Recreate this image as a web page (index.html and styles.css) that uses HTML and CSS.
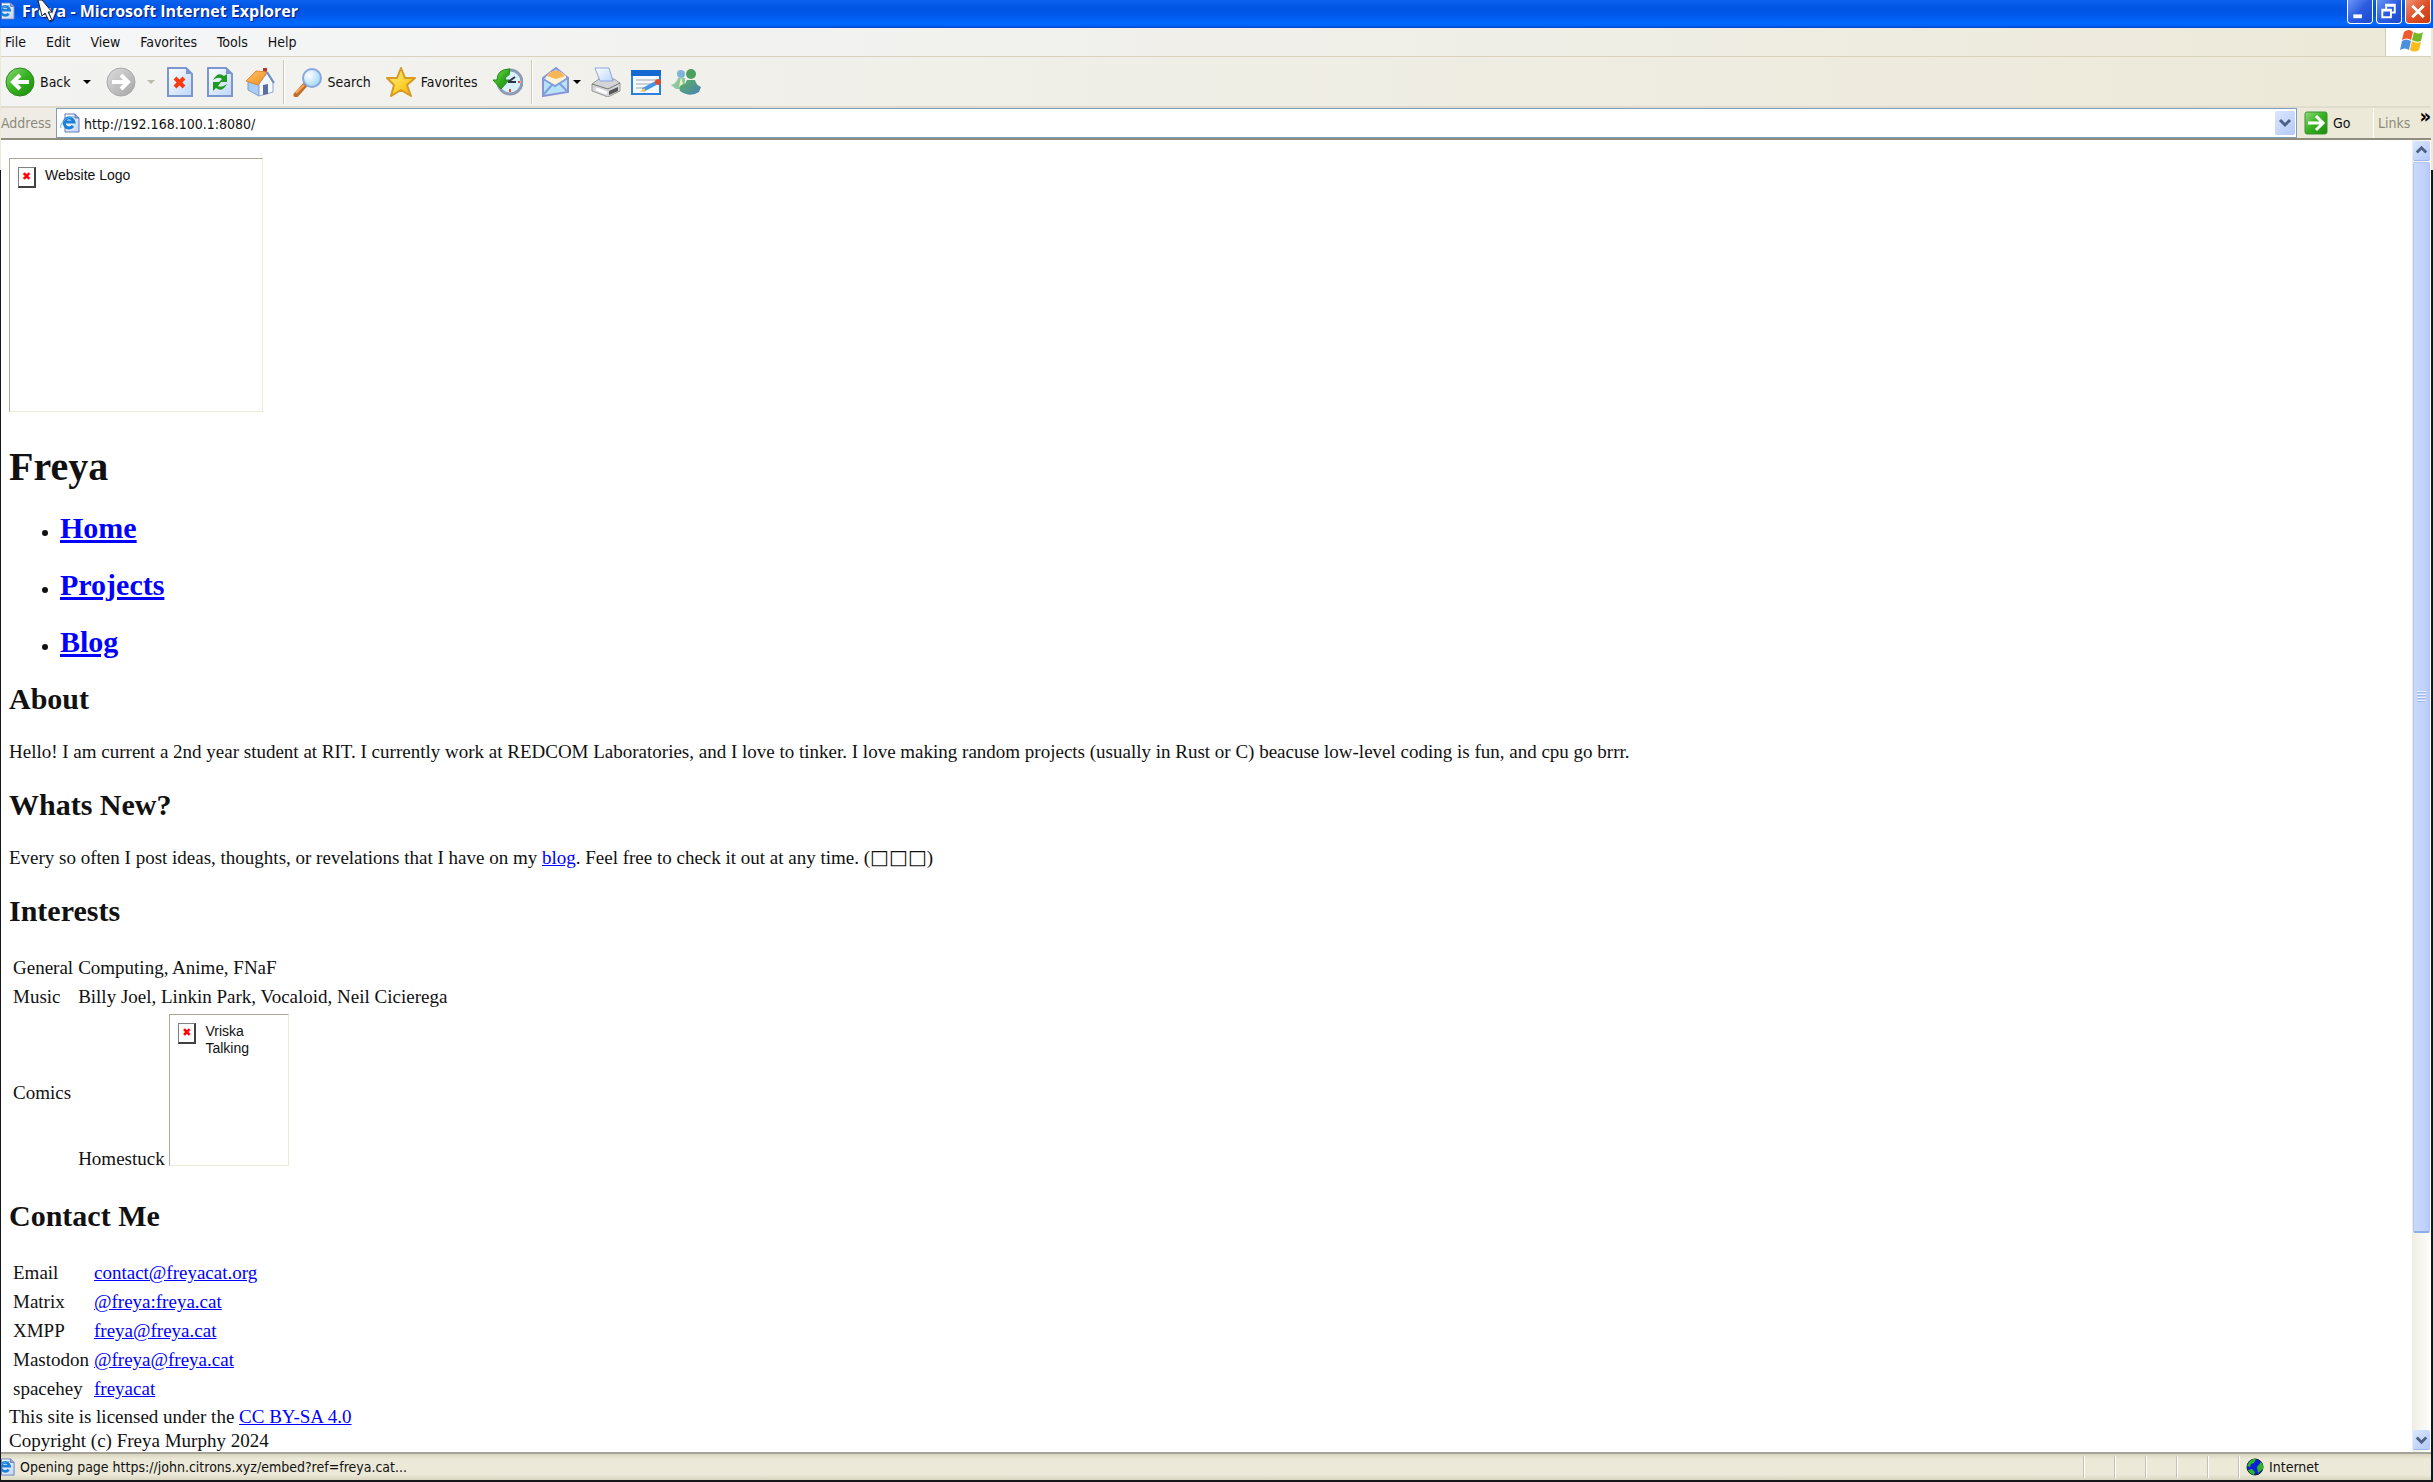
FILE: index.html
```html
<!DOCTYPE html>
<html lang="en">
<head>
    <meta charset="UTF-8">
    <meta name="viewport" content="width=device-width, initial-scale=1.0">
    <title>Freya - Microsoft Internet Explorer</title>
    <link rel="stylesheet" href="styles.css">
</head>
<body>
    <!-- shared gradients and the small page icon -->
    <svg class="defs" aria-hidden="true">
        <defs>
            <linearGradient id="green" x1="0" y1="0" x2="1" y2="1"><stop offset="0" stop-color="#8ddc78"/><stop offset=".5" stop-color="#36b01f"/><stop offset="1" stop-color="#1b8a0d"/></linearGradient>
            <linearGradient id="grey" x1="0" y1="0" x2="1" y2="1"><stop offset="0" stop-color="#dedede"/><stop offset="1" stop-color="#a4a4a4"/></linearGradient>
            <linearGradient id="paper" x1="0" y1="0" x2="1" y2="1"><stop offset="0" stop-color="#fff"/><stop offset="1" stop-color="#bcd6fb"/></linearGradient>
            <linearGradient id="gold" x1="0" y1="0" x2="1" y2="1"><stop offset="0" stop-color="#fff38a"/><stop offset=".6" stop-color="#fcd12f"/><stop offset="1" stop-color="#eb9d14"/></linearGradient>
            <linearGradient id="roof" x1="0" y1="0" x2="1" y2="1"><stop offset="0" stop-color="#ffc66a"/><stop offset="1" stop-color="#f08a1c"/></linearGradient>
            <linearGradient id="buddy" x1="0" y1="0" x2="1" y2="1"><stop offset="0" stop-color="#57b35c"/><stop offset="1" stop-color="#4d80b8"/></linearGradient>
            <radialGradient id="lens" cx=".35" cy=".35" r=".7"><stop offset="0" stop-color="#fff"/><stop offset="1" stop-color="#9ed7f8"/></radialGradient>
        </defs>
        <symbol id="ie-page" viewBox="0 0 20 20">
            <path d="M5 1h10l4 4v14H5z" fill="url(#paper)" stroke="#6478b8"/>
            <path d="M15 1v4h4" fill="#8fa6dd" stroke="#6478b8"/>
            <path d="M13 13a5 5 0 1 1 1-4H5" fill="none" stroke="#1e7fd6" stroke-width="3"/>
            <path d="M1 15C-1 11 7 3 14 4" fill="none" stroke="#58b1ee" stroke-width="1"/>
        </symbol>
    </svg>

    <div class="window">
        <header class="titlebar">
            <svg class="title-icon"><use href="#ie-page"/></svg>
            <span class="title-text">Freya - Microsoft Internet Explorer</span>
            <div class="controls">
                <button class="control" aria-label="Minimize"><svg viewBox="0 0 24 24"><path d="M5 15h9v4H5z" fill="#fff"/></svg></button>
                <button class="control" aria-label="Restore"><svg viewBox="0 0 24 24"><path d="M9 9V5h9v8h-4M9 6h9M5 10h9v8H5zM5 11h9" fill="none" stroke="#fff" stroke-width="2"/></svg></button>
                <button class="control close" aria-label="Close"><svg viewBox="0 0 24 24"><path d="M6 6l12 12M18 6L6 18" fill="none" stroke="#fff" stroke-width="3"/></svg></button>
            </div>
            <svg class="cursor" viewBox="0 0 16 22" aria-hidden="true"><path d="M1 0l4 16 3-3 4 8 3-1-4-8h4L5 0z" fill="#fff" stroke="#222"/></svg>
        </header>

        <nav class="menubar">
            <div class="menus">
                <button>File</button>
                <button>Edit</button>
                <button>View</button>
                <button>Favorites</button>
                <button>Tools</button>
                <button>Help</button>
            </div>
            <div class="throbber">
                <svg viewBox="0 0 26 24">
                    <path d="M6 3q5-4 9 0l-2 8q-4-3-9 0z" fill="#ee5a2b"/>
                    <path d="M16 3q5 3 9 0l-2 9q-4 2-9-1z" fill="#72b827"/>
                    <path d="M4 12q4-3 9 0l-2 9q-4-3-9 0z" fill="#4b8fdf"/>
                    <path d="M14 12q4 3 9 1l-2 8q-5 3-9 0z" fill="#f7bd1b"/>
                </svg>
            </div>
        </nav>

        <div class="toolbar">
            <button class="tool back">
                <svg class="icon" viewBox="0 0 30 30"><circle cx="15" cy="15" r="14" fill="url(#green)" stroke="#2b8a1c"/><path d="M24 15H8M15 8l-7 7 7 7" fill="none" stroke="#fff" stroke-width="4"/></svg>
                Back
                <span class="arrow"></span>
            </button>
            <button class="tool forward" disabled aria-label="Forward">
                <svg class="icon" viewBox="0 0 30 30"><circle cx="15" cy="15" r="14" fill="url(#grey)" stroke="#a9a9a9"/><path d="M6 15h16M15 8l7 7-7 7" fill="none" stroke="#fff" stroke-width="4"/></svg>
                <span class="arrow"></span>
            </button>
            <button class="tool" aria-label="Stop">
                <svg class="icon" viewBox="0 0 30 30"><path d="M3 1h18l6 6v22H3z" fill="url(#paper)" stroke="#7c96cf" stroke-width="2"/><path d="M21 1v6h6" fill="#7c96cf"/><path d="M10 11l9 9M19 11l-9 9" stroke="#fa3b12" stroke-width="4"/></svg>
            </button>
            <button class="tool" aria-label="Refresh">
                <svg class="icon" viewBox="0 0 30 30"><path d="M3 1h18l6 6v22H3z" fill="url(#paper)" stroke="#7c96cf" stroke-width="2"/><path d="M21 1v6h6" fill="#7c96cf"/><path d="M8 13q5-9 11-4l3-2v8h-8l3-3q-3-3-9 1zM22 17q-5 9-11 4l-3 3v-9h8l-3 4q4 2 9-2z" fill="#1e9a1e"/></svg>
            </button>
            <button class="tool" aria-label="Home">
                <svg class="icon" viewBox="0 0 30 30"><path d="M18 1h4v8h-4z" fill="#b4392b"/><path d="M3 15l11 3v11L3 23z" fill="#a9cdf5" stroke="#7d9cd0"/><path d="M14 17l8-11 6 10v9l-14 4z" fill="#f4f8ff" stroke="#8ea6d4"/><path d="M1 14L11 4l11 1-9 13z" fill="url(#roof)" stroke="#df8a32"/><path d="M22 5l7 11" stroke="#6f8bc4" stroke-width="2"/><path d="M18 18l5-1v10l-5 1z" fill="#5c6e9e"/></svg>
            </button>
            <span class="divider"></span>
            <button class="tool search">
                <svg class="icon" viewBox="0 0 30 30"><path d="M12 18L3 28" stroke="#c26c2b" stroke-width="5" stroke-linecap="round"/><path d="M11 18L3 26" stroke="#f7a95a" stroke-width="2"/><circle cx="19" cy="11" r="9" fill="url(#lens)" stroke="#8ba6dc" stroke-width="2"/></svg>
                Search
            </button>
            <button class="tool favorites">
                <svg class="icon" viewBox="0 0 30 30"><path d="M15 1l4 10 10 0-8 7 4 11-10-6-10 6 3-11-7-7h10z" fill="url(#gold)" stroke="#d89a26" stroke-width="2" stroke-linejoin="round"/></svg>
                Favorites
            </button>
            <button class="tool history" aria-label="History">
                <svg class="icon" viewBox="0 0 30 30"><circle cx="17" cy="15" r="12" fill="#d6f0fd" stroke="#8e9bb5" stroke-width="3"/><path d="M15 15l7-5M15 15h8" stroke="#334" stroke-width="2"/><path d="M17 22v3M25 15h2" stroke="#e5532f" stroke-width="2"/><path d="M17 2Q4 2 4 13H0l8 9 8-9h-4q0-4 4-5z" fill="url(#green)" stroke="#258a1a"/></svg>
            </button>
            <span class="divider"></span>
            <button class="tool mail" aria-label="Mail">
                <svg class="icon" viewBox="0 0 30 30"><path d="M2 11L15 1l12 10v14L2 29z" fill="#b7e2fb" stroke="#8b92d6" stroke-width="2"/><path d="M5 10Q14-2 25 9v4l-11 6-9-5z" fill="#fdf3da"/><path d="M6 9Q15-2 24 9l-9 3z" fill="#f6b655"/><path d="M2 12l12 7 13-8M2 28l9-10M27 25l-9-9" fill="none" stroke="#7e9fdd" stroke-width="2"/></svg>
                <span class="arrow"></span>
            </button>
            <button class="tool" aria-label="Print">
                <svg class="icon" viewBox="0 0 30 30"><path d="M1 17l7-5h15l6 4v8l-12 6-16-6z" fill="#d5d5d8" stroke="#999"/><path d="M4 1h14l4 13H9z" fill="url(#paper)" stroke="#8ba6e0"/><path d="M1 17l16 5 12-6" fill="none" stroke="#777"/><path d="M5 22l11 4" stroke="#fff" stroke-width="3"/><path d="M18 24l9-4v4l-9 4z" fill="#555"/></svg>
            </button>
            <button class="tool" aria-label="Edit">
                <svg class="icon" viewBox="0 0 30 30"><path d="M1 4h28v23H1z" fill="#f4f8ff" stroke="#2b7fdd" stroke-width="2"/><path d="M0 3h30v6H0z" fill="#1468cf"/><path d="M5 13h20M5 17h16M5 21h8" stroke="#a5a5ad" stroke-width="1"/><path d="M12 23l13-7" stroke="#4696e8" stroke-width="4"/><path d="M9 25l4-4 2 3z" fill="#f2c14e"/><circle cx="27" cy="15" r="3" fill="#df4c2b"/></svg>
            </button>
            <button class="tool" aria-label="Messenger">
                <svg class="icon" viewBox="0 0 30 30"><circle cx="10" cy="7" r="4" fill="#7fb4d8"/><path d="M0 18q5-1 7-7h7v11H5z" fill="#8cc7a0"/><path d="M10 10l2 7-4 3z" fill="#f5efb0"/><circle cx="20" cy="7" r="5" fill="#4da05f"/><path d="M9 24q-2-6 5-7l2-4h8q1 5 6 7l-2 5q-9 6-19-1z" fill="url(#buddy)"/></svg>
            </button>
        </div>

        <form class="addressbar">
            <label for="address">Address</label>
            <div class="combo">
                <svg class="page-icon"><use href="#ie-page"/></svg>
                <input id="address" type="text" value="http://192.168.100.1:8080/">
                <button type="button" class="drop" aria-label="Show addresses"><svg viewBox="0 0 20 24"><path d="M5 9l5 5 5-5" fill="none" stroke="#4d6185" stroke-width="3"/></svg></button>
            </div>
            <button type="button" class="go">
                <svg viewBox="0 0 24 24"><rect x="1" y="1" width="22" height="22" rx="2" fill="url(#green)" stroke="#3f8f35"/><path d="M4 12h15M12 5l7 7-7 7" fill="none" stroke="#fff" stroke-width="3"/></svg>
                Go
            </button>
            <div class="links">Links <span class="more">»</span></div>
        </form>

        <div class="viewport">
            <main class="page">
                <div class="broken logo" role="img" aria-label="Website Logo">
                    <span class="missing">✖</span>
                    <span>Website Logo</span>
                </div>
                <h1>Freya</h1>
                <ul>
                    <li><h2><a href="#home">Home</a></h2></li>
                    <li><h2><a href="#projects">Projects</a></h2></li>
                    <li><h2><a href="#blog">Blog</a></h2></li>
                </ul>

                <h2>About</h2>
                <p>Hello! I am current a 2nd year student at RIT. I currently work at REDCOM Laboratories, and I love to tinker. I love making random projects (usually in Rust or C) beacuse low-level coding is fun, and cpu go brrr.</p>

                <h2>Whats New?</h2>
                <p>Every so often I post ideas, thoughts, or revelations that I have on my <a href="#blog">blog</a>. Feel free to check it out at any time. (<span class="tofu">□□□</span>)</p>

                <h2>Interests</h2>
                <table>
                    <tr><td>General</td><td>Computing, Anime, FNaF</td></tr>
                    <tr><td>Music</td><td>Billy Joel, Linkin Park, Vocaloid, Neil Cicierega</td></tr>
                    <tr>
                        <td>Comics</td>
                        <td>Homestuck
                            <div class="broken vriska" role="img" aria-label="Vriska Talking">
                                <span class="missing">✖</span>
                                <span>Vriska Talking</span>
                            </div>
                        </td>
                    </tr>
                </table>

                <h2>Contact Me</h2>
                <table>
                    <tr><td>Email</td><td><a href="#email">contact@freyacat.org</a></td></tr>
                    <tr><td>Matrix</td><td><a href="#matrix">@freya:freya.cat</a></td></tr>
                    <tr><td>XMPP</td><td><a href="#xmpp">freya@freya.cat</a></td></tr>
                    <tr><td>Mastodon</td><td><a href="#mastodon">@freya@freya.cat</a></td></tr>
                    <tr><td>spacehey</td><td><a href="#spacehey">freyacat</a></td></tr>
                </table>
                <footer>
                    This site is licensed under the <a href="#license">CC BY-SA 4.0</a><br>
                    Copyright (c) Freya Murphy 2024
                </footer>
            </main>
            <div class="scrollbar">
                <button class="scroll-button" aria-label="Scroll up"><svg viewBox="0 0 18 20"><path d="M4 12l5-5 5 5" fill="none" stroke="#4d6185" stroke-width="3"/></svg></button>
                <div class="track">
                    <div class="thumb"><span class="grip"></span></div>
                </div>
                <button class="scroll-button" aria-label="Scroll down"><svg viewBox="0 0 18 20"><path d="M4 8l5 5 5-5" fill="none" stroke="#4d6185" stroke-width="3"/></svg></button>
            </div>
        </div>

        <div class="statusbar">
            <svg class="status-icon"><use href="#ie-page"/></svg>
            <span class="status-text">Opening page https://john.citrons.xyz/embed?ref=freya.cat...</span>
            <span class="pane"></span>
            <span class="pane"></span>
            <span class="pane"></span>
            <span class="pane"></span>
            <span class="pane"></span>
            <span class="pane zone">
                <svg viewBox="0 0 18 18"><circle cx="9" cy="9" r="8" fill="#0a20d8" stroke="#122"/><path d="M3 4q4-4 7-3l-2 4-3 1-1 3-3-1zM11 9l4-5q3 3 2 7l-5 4zM2 12l4-1 3 3-1 3q-4-1-6-5z" fill="#2db52b"/></svg>
                Internet
            </span>
        </div>
    </div>
</body>
</html>
```
FILE: styles.css
```css
* {
    box-sizing: border-box;
}
body {
    margin: 0;
    background: linear-gradient(#0a5be8 28px, #ece9d8 28px, #ece9d8 170px, #14161a 170px);
    font-family: "DejaVu Sans Condensed", "DejaVu Sans", sans-serif;
    font-size: 14px;
    color: #111;
}
button {
    font: inherit;
    color: inherit;
    background: none;
    border: none;
    padding: 0;
    margin: 0;
}
svg {
    display: block;
    flex: none;
}
.defs {
    position: absolute;
    width: 0;
    height: 0;
}
.window {
    display: flex;
    flex-direction: column;
    height: 100vh;
    padding: 0 2px 2px 1px;
}

/* title bar */
.titlebar {
    position: relative;
    display: flex;
    align-items: center;
    height: 28px;
    flex: none;
    overflow: hidden;
    background: linear-gradient(#0a62ee, #0054e3 30%, #0058ea 55%, #0068ff 80%, #0066fb 90%, #0046c8);
}
.title-icon {
    width: 18px;
    height: 18px;
    margin-left: -4px;
    margin-bottom: 6px;
}
.title-text {
    flex: 1;
    margin-left: 7px;
    margin-bottom: 6px;
    font-family: "Open Sans", sans-serif;
    font-weight: 700;
    font-size: 16px;
    line-height: 20px;
    color: #fff;
    text-shadow: 1px 1px 1px #0a1883;
}
.controls {
    display: flex;
    gap: 3px;
    align-self: flex-start;
}
.control {
    width: 26px;
    height: 24px;
    border: 1px solid #fff;
    border-top: none;
    border-radius: 0 0 4px 4px;
    background: linear-gradient(135deg, #6c94f5, #2a5be0 50%, #1d4bd0);
}
.control svg {
    width: 24px;
    height: 23px;
}
.close {
    background: linear-gradient(135deg, #ef9579, #e04f27 50%, #c93b12);
}
.cursor {
    position: absolute;
    left: 36px;
    top: 0;
    width: 16px;
    height: 22px;
}

/* menus */
.menubar {
    display: flex;
    height: 29px;
    flex: none;
    background: linear-gradient(90deg, #f5f6f8, #f1f1ee 40%, #ece9d8);
    border-bottom: 1px solid #d8d2bd;
}
.menus {
    display: flex;
    flex: 1;
    align-items: center;
    gap: 20px;
    padding-left: 4px;
    border-right: 1px solid #d0ccba;
}
.throbber {
    width: 45px;
    padding: 1px 0 0 12px;
    background: #fff;
}
.throbber svg {
    width: 26px;
    height: 24px;
}

/* toolbar */
.toolbar {
    display: flex;
    align-items: center;
    gap: 10px;
    height: 51px;
    flex: none;
    padding-left: 4px;
    background: linear-gradient(90deg, #f3f3f1, #f0efe8 40%, #ece9d8);
    border-bottom: 2px solid #dfdccd;
}
.tool {
    display: flex;
    align-items: center;
    gap: 5px;
}
.icon {
    width: 30px;
    height: 30px;
}
.back {
    margin-right: 5px;
}
.arrow {
    margin-left: 6px;
    border: 4px solid transparent;
    border-top-color: #000;
    border-bottom: none;
}
.back .arrow {
    margin-left: 7px;
}
.forward .arrow {
    border-top-color: #bbb8ad;
}
.divider {
    width: 2px;
    height: 44px;
    margin: 0 -2px;
    border-left: 1px solid #cdc9b7;
    background: #fff;
}
.search {
    margin-right: 5px;
}
.history {
    margin-left: 5px;
}
.mail {
    gap: 0;
}
.mail .arrow {
    margin-left: 2px;
}

/* address bar */
.addressbar {
    display: flex;
    height: 32px;
    flex: none;
    line-height: 26px;
    background: linear-gradient(90deg, #eeece4, #ece9d8);
    border-bottom: 2px solid #908d80;
}
.addressbar label {
    width: 55px;
    line-height: 30px;
    color: #8c897c;
}
.combo {
    display: flex;
    align-items: center;
    flex: 1;
    height: 30px;
    padding: 0 1px 0 3px;
    background: #fff;
    border: 1px solid #7f9db9;
}
.page-icon {
    width: 20px;
    height: 20px;
}
.combo input {
    flex: 1;
    min-width: 0;
    margin-left: 4px;
    padding: 1px 0 0;
    border: none;
    outline: none;
    background: none;
    font: inherit;
    color: inherit;
}
.drop {
    width: 20px;
    height: 24px;
    border-radius: 2px;
    background: linear-gradient(135deg, #dbe6ff, #b3c9f8);
}
.drop svg {
    width: 20px;
    height: 24px;
}
.go {
    display: flex;
    align-items: center;
    gap: 5px;
    width: 77px;
    padding-left: 7px;
    border-right: 1px solid #fff;
}
.go svg {
    width: 24px;
    height: 24px;
}
.links {
    display: flex;
    justify-content: space-between;
    width: 57px;
    padding-left: 4px;
    line-height: 30px;
    color: #8c897c;
}
.more {
    font-size: 20px;
    font-weight: 700;
    line-height: 16px;
    color: #000;
}

/* document */
.viewport {
    display: flex;
    flex: 1;
    min-height: 0;
    background: #fff;
}
.page {
    flex: 1;
    overflow: hidden;
    padding: 18px 8px 0;
    font-family: "Liberation Serif", serif;
    font-size: 19px;
    line-height: 24px;
}
h1 {
    margin: 35px 0 25px;
    font-size: 40px;
    line-height: 40px;
}
h2 {
    margin: 25px 0;
    font-size: 30px;
    line-height: 32px;
}
p {
    margin: 25px 0;
}
ul {
    margin: 25px 0;
    padding-left: 51px;
}
a {
    color: #00f;
}
table {
    border-spacing: 3px;
}
td {
    padding: 1px;
}
.tofu {
    font-family: "DejaVu Sans", sans-serif;
    font-size: 20px;
    line-height: 20px;
}
.broken {
    display: flex;
    gap: 9px;
    padding: 8px;
    border: 1px solid #ece9d8;
    border-top-color: #aca899;
    border-left-color: #aca899;
    font-family: "Liberation Sans", sans-serif;
    font-size: 14px;
    line-height: 17px;
}
.logo {
    width: 254px;
    height: 254px;
}
.vriska {
    display: inline-flex;
    width: 120px;
    height: 152px;
    vertical-align: bottom;
    margin-bottom: 5px;
}
.missing {
    flex: none;
    width: 18px;
    height: 21px;
    border: 1px solid #808080;
    border-right: 2px solid #404040;
    border-bottom: 2px solid #404040;
    font-family: "DejaVu Sans", sans-serif;
    font-size: 11px;
    line-height: 18px;
    text-align: center;
    color: #f00;
}

/* scroll bar */
.scrollbar {
    display: flex;
    flex-direction: column;
    width: 19px;
    padding: 1px 1px 2px;
    background: linear-gradient(90deg, #eeede5, #fefefb);
}
.scroll-button {
    height: 20px;
    flex: none;
    border-radius: 2px;
    background: linear-gradient(135deg, #dbe6ff, #b3c9f8);
    border-bottom: 1px solid #9db5e8;
}
.scroll-button svg {
    width: 17px;
    height: 19px;
}
.track {
    flex: 1;
    padding: 1px 0;
}
.thumb {
    display: flex;
    align-items: center;
    justify-content: center;
    height: 84.5%;
    border: 1px solid #b1c6f5;
    border-bottom: 2px solid #8fadea;
    border-radius: 2px;
    background: linear-gradient(90deg, #c9d8fc, #c2d3fc 60%, #b5cbfb);
}
.grip {
    width: 9px;
    height: 12px;
    background: repeating-linear-gradient(#e8f0ff 0 1px, #9fbaf0 1px 2px, #c2d3fc 2px 3px);
}

/* status bar */
.statusbar {
    display: flex;
    align-items: center;
    height: 28px;
    flex: none;
    overflow: hidden;
    background: linear-gradient(#d8d4c0, #ece9d8 20%, #ece9d8 80%, #d8d4c0);
    border-top: 2px solid #a5a497;
}
.status-icon {
    width: 18px;
    height: 20px;
    margin-left: -4px;
}
.status-text {
    flex: 1;
    margin-left: 5px;
}
.pane {
    width: 31px;
    height: 22px;
    border-left: 1px solid #c6c2b0;
    box-shadow: inset 1px 0 #fff;
}
.zone {
    display: flex;
    align-items: center;
    gap: 5px;
    width: 193px;
    padding-left: 7px;
}
.zone svg {
    width: 18px;
    height: 18px;
}
```
